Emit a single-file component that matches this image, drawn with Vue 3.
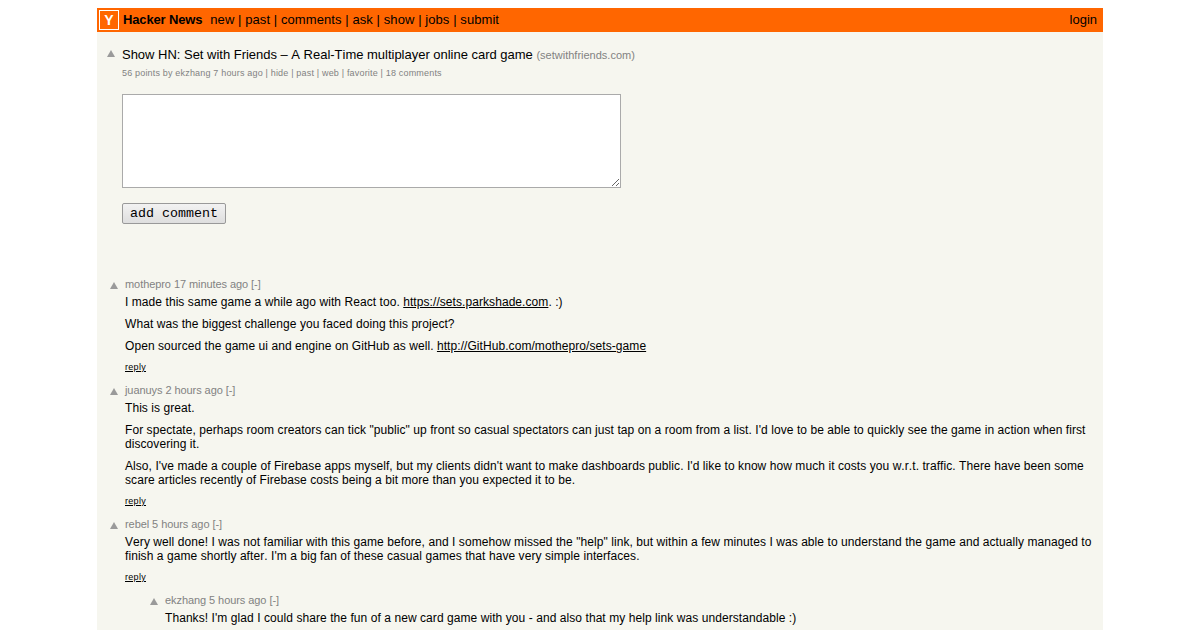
<script setup>
const nav = ['new', 'past', 'comments', 'ask', 'show', 'jobs', 'submit']
const links = ['hide', 'past', 'web', 'favorite', '18 comments']
const comments = [
  { user: 'mothepro', age: '17 minutes ago', indent: 0, reply: true, paras: [
    ['I made this same game a while ago with React too. ', { href: 'https://sets.parkshade.com' }, '. :)'],
    ['What was the biggest challenge you faced doing this project?'],
    ['Open sourced the game ui and engine on GitHub as well. ', { href: 'http://GitHub.com/mothepro/sets-game' }],
  ] },
  { user: 'juanuys', age: '2 hours ago', indent: 0, reply: true, paras: [
    ['This is great.'],
    ['For spectate, perhaps room creators can tick "public" up front so casual spectators can just tap on a room from a list. I\'d love to be able to quickly see the game in action when first discovering it.'],
    ['Also, I\'ve made a couple of Firebase apps myself, but my clients didn\'t want to make dashboards public. I\'d like to know how much it costs you w.r.t. traffic. There have been some scare articles recently of Firebase costs being a bit more than you expected it to be.'],
  ] },
  { user: 'rebel', age: '5 hours ago', indent: 0, reply: true, paras: [
    ['Very well done! I was not familiar with this game before, and I somehow missed the "help" link, but within a few minutes I was able to understand the game and actually managed to finish a game shortly after. I\'m a big fan of these casual games that have very simple interfaces.'],
  ] },
  { user: 'ekzhang', age: '5 hours ago', indent: 40, reply: false, paras: [
    ['Thanks! I\'m glad I could share the fun of a new card game with you - and also that my help link was understandable :)'],
  ] },
]
</script>

<template>
  <div class="page">
    <div class="main">
      <header class="bar">
        <span class="logo">Y</span>
        <b class="brand">Hacker News</b>
        <nav class="nav">
          <template v-for="(n, i) in nav" :key="n"><span v-if="i"> | </span><a>{{ n }}</a></template>
        </nav>
        <a class="login">login</a>
      </header>

      <section class="content">
        <div class="story">
          <span class="arrow story-arrow"></span>
          <div class="story-body">
            <div class="title">Show HN: Set with Friends – A Real-Time multiplayer online card game <span class="site">(setwithfriends.com)</span></div>
            <div class="sub">56 points by ekzhang 7 hours ago<template v-for="l in links" :key="l"> | {{ l }}</template></div>
            <textarea class="box"></textarea>
            <button class="add" type="button">add comment</button>
          </div>
        </div>

        <div class="comments">
          <article v-for="c in comments" :key="c.user" class="comment" :style="{ paddingLeft: c.indent + 'px' }">
            <span class="arrow"></span>
            <div class="comment-body">
              <div class="meta">{{ c.user }} {{ c.age }} [-]</div>
              <p v-for="(p, i) in c.paras" :key="i" class="para"><template v-for="(s, j) in p" :key="j"><a v-if="s.href" class="link">{{ s.href }}</a><template v-else>{{ s }}</template></template></p>
              <a v-if="c.reply" class="reply">reply</a>
            </div>
          </article>
        </div>
      </section>
    </div>
  </div>
</template>

<style>
html, body { margin: 0; overflow: hidden; background: #fff; }
</style>

<style scoped>
.page { height: 630px; overflow: hidden; font-family: "Liberation Sans", Arial, sans-serif; font-kerning: none; padding-top: 8px; box-sizing: border-box; }
.main { width: 1006px; margin: 0 auto; background: #f6f6ef; min-height: 622px; }
.bar { height: 24px; background: #ff6600; display: flex; align-items: center; padding: 0 6px 2px 2px; font-size: 13px; color: #222; box-sizing: border-box; }
.logo { width: 18px; height: 18px; border: 1px solid #fff; color: #fff; font-weight: bold; font-size: 14px; line-height: 18px; text-align: center; flex: none; position: relative; top: 1px; }
.brand { margin-left: 4px; color: #000; letter-spacing: -0.15px; }
.nav { margin-left: 8px; white-space: pre; color: #000; letter-spacing: 0.08px; }
.login { margin-left: auto; color: #000; }
.content { padding-top: 15px; }
.story { display: flex; }
.arrow { flex: none; width: 0; height: 0; border-left: 4px solid transparent; border-right: 4px solid transparent; border-bottom: 7px solid #9a9a9a; }
.story-arrow { margin: 3px 0 0 10px; }
.story-body { margin-left: 7px; }
.title { font-size: 13px; line-height: 16px; color: #000; letter-spacing: -0.015px; }
.site { font-size: 11px; color: #828282; letter-spacing: 0; }
.sub { font-size: 9px; line-height: 12px; color: #828282; margin-top: 4px; letter-spacing: 0.18px; }
.box { display: block; width: 499px; height: 94px; margin: 15px 0 0; padding: 2px; box-sizing: border-box; background: #fff; border: 1px solid #aaa; border-radius: 0; }
.add { display: block; margin-top: 15px; width: 104px; height: 21px; padding: 0; font-family: "Liberation Mono", monospace; font-size: 13.33px; color: #000; background: linear-gradient(#f2f2f2, #dedede); border: 1px solid #999; border-radius: 2px; }
.comments { margin-top: 54px; }
.comment { display: flex; margin-bottom: 11px; }
.comment .arrow { margin: 4px 0 0 13px; }
.comment-body { margin-left: 7px; padding-right: 10px; flex: 1; min-width: 0; }
.meta { font-size: 11px; line-height: 13px; color: #828282; letter-spacing: -0.07px; }
.para { margin: 4px 0 8px; font-size: 12px; line-height: 14px; color: #000; letter-spacing: 0.068px; }
.link { text-decoration: underline; color: #000; }
.reply { display: block; font-size: 9px; line-height: 12px; text-decoration: underline; color: #000; letter-spacing: 0.3px; }
</style>
